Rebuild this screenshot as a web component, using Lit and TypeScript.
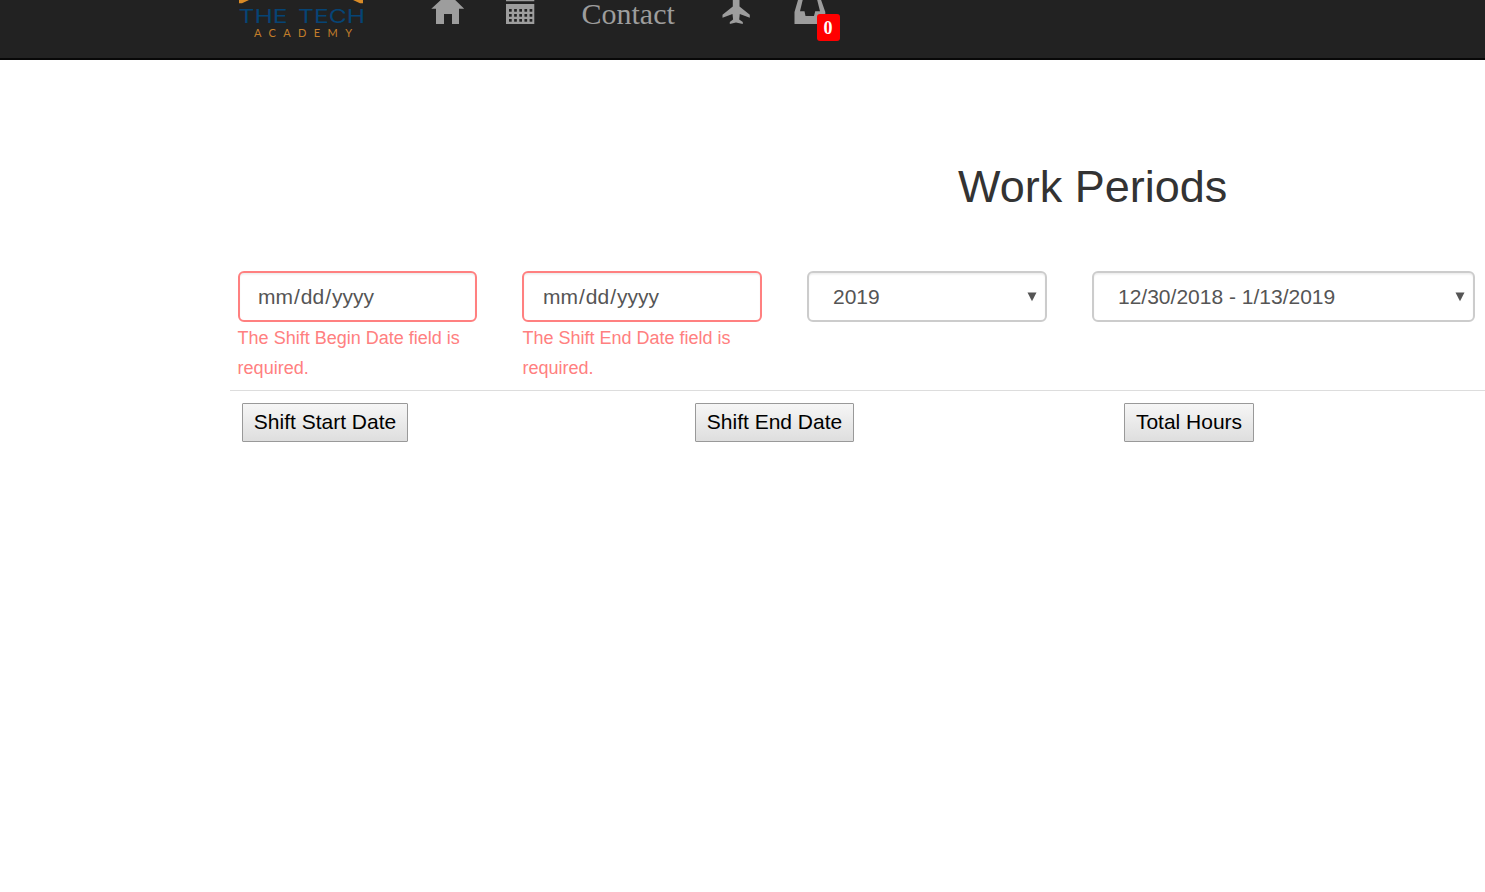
import { LitElement, html, css, svg } from "lit";
import { customElement } from "lit/decorators.js";

const HOLES = [0, 1, 2].flatMap((r) => [0, 1, 2, 3, 4].map((c) => [3 + c * 5.15, 9 + r * 5]));

@customElement("app-root")
export class AppRoot extends LitElement {
  static styles = css`
    :host { display: block; width: 100%; height: 892px; overflow: hidden; background: #fff;
      font-family: "Liberation Sans", Arial, sans-serif; color: #333; }
    * { box-sizing: border-box; }
    svg { display: block; }
    .nav { height: 60px; background: #222; border-bottom: 2px solid #080808; display: flex;
      align-items: flex-start; padding-left: 235px; }
    .logo { width: 135px; }
    .home { margin-left: 60px; }
    .cal { margin-left: 40px; }
    .contact { margin-left: 46.5px; width: 96px; font: 30px/28px "Liberation Serif", "Times New Roman", serif;
      color: #9d9d9d; white-space: nowrap; }
    .plane { margin-left: 43px; }
    .inbox { margin-left: 42px; position: relative; }
    .badge { position: absolute; left: 24px; top: 14px; width: 23px; height: 27px; border-radius: 3px;
      background: #f00; color: #fff; text-align: center; font: bold 18px/28px "Liberation Serif", serif; }
    .main { margin-left: 230px; }
    h1 { margin: 0; padding: 102px 0 0 728px; height: 211px; font-size: 45px; line-height: 50px;
      font-weight: 400; white-space: nowrap; }
    .row { display: grid; grid-template-columns: 239px 240px 240px 383px; column-gap: 45px;
      padding-left: 8px; height: 119px; align-items: start; width: 1255px; }
    .field { height: 51px; border: 2px solid #ccc; border-radius: 6px; font-size: 21px; line-height: 48px;
      color: #555; display: flex; justify-content: space-between; padding: 0 8px 0 24px;
      box-shadow: inset 0 1.5px 1.5px rgba(0,0,0,.075); white-space: nowrap; }
    .bad { border-color: #ff8080; padding-left: 18px; justify-content: flex-start; }
    .bad.second { padding-left: 19px; }
    .slash { margin: 0 1px; }
    .arrow { margin-top: 19px; }
    .error { font-size: 18px; line-height: 30px; color: #ff8080; margin: 1px 0 0 -.4px; }
    .second + .error { margin-left: .5px; }
    .heads { border-top: 1px solid #ddd; display: flex; padding: 12px 0 0 12px; }
    .btn { height: 39px; border: 1px solid #999; border-radius: 1px; padding: 0 0 2px; margin: 0;
      background: linear-gradient(#f6f6f6, #dedede); color: #000; font: 21px/35px "Liberation Sans", Arial, sans-serif;
      white-space: nowrap; }
    .start { width: 166px; }
    .end { width: 159px; margin-left: 287px; }
    .total { width: 130px; margin-left: 270px; }
  `;

  private arrow() {
    return html`<svg class="arrow" width="10" height="10" viewBox="0 0 10 10"><path d="M.5 .5h9L5 9.3z" fill="#555"/></svg>`;
  }

  private dateHint() {
    return html`mm<span class="slash">/</span>dd<span class="slash">/</span>yyyy`;
  }

  render() {
    return html`
      <header class="nav">
        <svg class="logo" width="135" height="44" viewBox="0 0 135 44">
          <path d="M4 0v3.2h3L14 0zM128 0v3.2h-3L118 0z" fill="#d98b27"/>
          <text x="3.500" y="23" font-family="Inter, sans-serif" font-size="18" fill="#064475" textLength="49" lengthAdjust="spacingAndGlyphs">THE</text>
          <text x="63" y="23" font-family="Inter, sans-serif" font-size="18" fill="#064475" textLength="67" lengthAdjust="spacingAndGlyphs">TECH</text>
          <text x="19" y="37" font-family="Lato, sans-serif" font-size="11" fill="#c27e2a" textLength="98">ACADEMY</text>
        </svg>
        <svg class="home" width="36" height="26" viewBox="430 0 36 26">
          <path d="M431.3 8.8L440.8 0h14.4l9 8.8H459V24h-7V14h-8v10h-8V8.8z" fill="#9d9d9d"/>
        </svg>
        <svg class="cal" width="29" height="26" viewBox="0 0 29 26">
          <path d="M0 0h28.3v1.3H0zM0 4h28.3v20H0z" fill="#9d9d9d"/>
          ${HOLES.map(([x, y]) => svg`<rect x=${x} y=${y} width="2.7" height="2.7" fill="#222"/>`)}
        </svg>
        <span class="contact">Contact</span>
        <svg class="plane" width="30" height="26" viewBox="721 0 30 26">
          <path d="M732.8 0h6.7v6.500l10.300 8.200v3.100L739.800 14l-.6 5.500 3.600 2.500v2L736 22.500 729.800 24v-2l3.300-2.500-.6-5.500L722.500 17.800v-3.100l10.300-8.200z" fill="#9d9d9d"/>
        </svg>
        <div class="inbox">
          <svg width="34" height="26" viewBox="793 0 34 26">
            <path d="M798 0h4.700L800 11.300h4.500l1 4.700h8.500l1.200-4.700h4.800L817.200 0h3.900l4.200 12v12H794.500V12z" fill="#9d9d9d"/>
          </svg>
          <span class="badge">0</span>
        </div>
      </header>
      <main class="main">
        <h1>Work Periods</h1>
        <section class="row">
          <div><div class="field bad"><span>${this.dateHint()}</span></div><div class="error">The Shift Begin Date field is required.</div></div>
          <div><div class="field bad second"><span>${this.dateHint()}</span></div><div class="error">The Shift End Date field is required.</div></div>
          <div class="field"><span>2019</span>${this.arrow()}</div>
          <div class="field"><span>12/30/2018 - 1/13/2019</span>${this.arrow()}</div>
        </section>
        <section class="heads">
          <button class="btn start">Shift Start Date</button>
          <button class="btn end">Shift End Date</button>
          <button class="btn total">Total Hours</button>
        </section>
      </main>`;
  }
}
